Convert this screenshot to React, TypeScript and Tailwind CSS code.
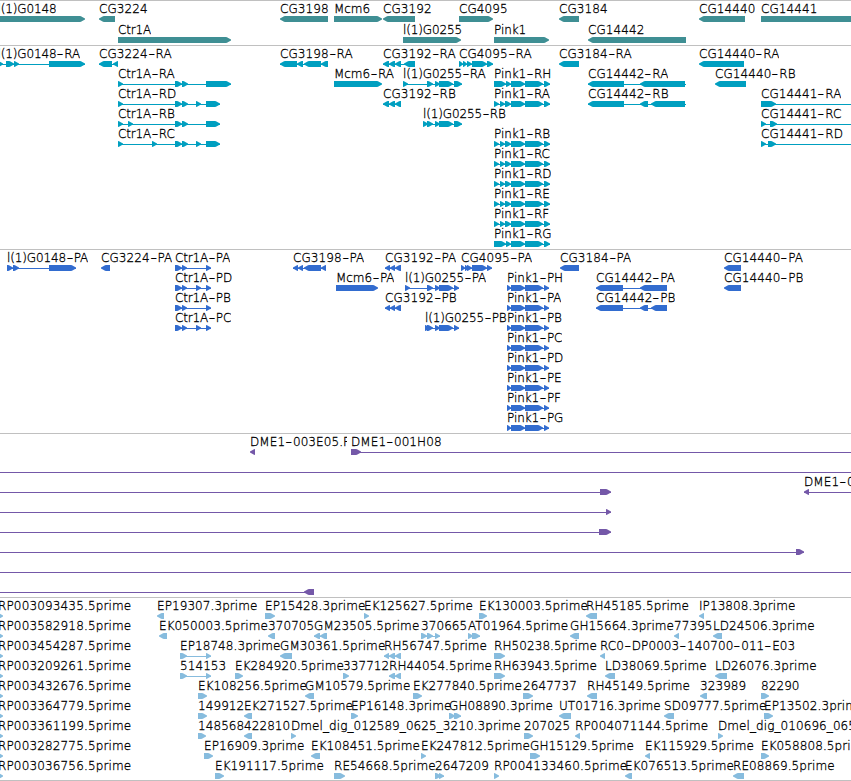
type Dir = 'L' | 'R';
type Feature = {
  label?: string;
  x: number;
  dir: Dir;
  blocks: [number, number][];
  /** Extent of the thin connector, when it reaches past the blocks. */
  line?: [number, number];
  /** Visible width of a clipped label. */
  clip?: number;
};
type Row = Feature[];

const f = (label: string, dir: Dir, blocks: [number, number][], line?: [number, number], x?: number): Feature => ({
  label,
  dir,
  blocks,
  line,
  x: x ?? blocks[0][0],
});

const genes: Row[] = [
  [
    f('l(1)G0148', 'R', [[-10, 85]], undefined, -2.5),
    f('CG3224', 'L', [[99, 115]]),
    f('CG3198', 'L', [[280, 328]]),
    f('Mcm6', 'R', [[334, 382]]),
    f('CG3192', 'L', [[383, 415]]),
    f('CG4095', 'R', [[459, 493]]),
    f('CG3184', 'L', [[559, 579]]),
    f('CG14440', 'L', [[699, 745]]),
    f('CG14441', 'R', [[761, 900]]),
  ],
  [
    f('Ctr1A', 'R', [[118, 231]]),
    f('l(1)G0255', 'R', [[403, 461]]),
    f('Pink1', 'R', [[494, 549]]),
    f('CG14442', 'L', [[588, 686]]),
  ],
];

const pinkR = (name: string) =>
  f(name, 'R', [[494, 499], [500, 505], [505, 511], [511, 525], [525, 543], [544, 550]]);
const pinkRLong = (name: string) => f(name, 'R', [[494, 506], [506, 511], [511, 525], [525, 543], [544, 550]]);

const transcripts: Row[] = [
  [
    f('l(1)G0148-RA', 'R', [[-2, 3], [6, 14], [14, 19], [49, 85]], [-10, 85], -2.5),
    f('CG3224-RA', 'L', [[99, 112], [113, 118]]),
    f('CG3198-RA', 'L', [[280, 297], [297, 303], [304, 321], [321, 328]]),
    f('CG3192-RA', 'L', [[383, 389], [389, 395], [395, 401], [404, 415]]),
    f('CG4095-RA', 'R', [[459, 463], [463, 467], [467, 472], [472, 487], [487, 493]]),
    f('CG3184-RA', 'L', [[559, 579]]),
    f('CG14440-RA', 'L', [[699, 744]]),
  ],
  [
    f('Ctr1A-RA', 'R', [[118, 123], [175, 182], [182, 188], [206, 231]]),
    f('Mcm6-RA', 'R', [[334, 382]]),
    f('l(1)G0255-RA', 'R', [[403, 408], [427, 433], [435, 440], [439, 453], [454, 462]]),
    pinkRLong('Pink1-RH'),
    f('CG14442-RA', 'L', [[588, 624], [640, 685]], [588, 686]),
    f('CG14440-RB', 'L', [[715, 746]]),
  ],
  [
    f('Ctr1A-RD', 'R', [[118, 123], [175, 182], [182, 188], [196, 201], [206, 220]]),
    f('CG3192-RB', 'L', [[383, 389], [389, 395], [395, 401]]),
    pinkR('Pink1-RA'),
    f('CG14442-RB', 'L', [[588, 624], [640, 648], [651, 685]], [588, 686]),
    f('CG14441-RA', 'R', [[761, 776]], [761, 900]),
  ],
  [
    f('Ctr1A-RB', 'R', [[118, 123], [128, 133], [175, 182], [182, 188], [206, 220]]),
    f('l(1)G0255-RB', 'R', [[423, 428], [427, 433], [435, 440], [439, 453], [454, 462]]),
    f('CG14441-RC', 'R', [[761, 766], [770, 777]], [761, 900]),
  ],
  [
    f('Ctr1A-RC', 'R', [[118, 123], [152, 157], [175, 182], [182, 188], [196, 201], [206, 220]]),
    pinkR('Pink1-RB'),
    f('CG14441-RD', 'R', [[761, 766], [768, 776]], [761, 900]),
  ],
  [pinkR('Pink1-RC')],
  [pinkR('Pink1-RD')],
  [pinkR('Pink1-RE')],
  [pinkR('Pink1-RF')],
  [pinkRLong('Pink1-RG')],
];

const pinkP = (name: string) => f(name, 'R', [[507, 511], [511, 525], [525, 543], [544, 549]]);
const ctrShort = (name: string) => f(name, 'R', [[175, 182], [182, 187], [206, 211]]);
const ctrLong = (name: string) => f(name, 'R', [[175, 182], [182, 187], [196, 201], [206, 211]]);

const proteins: Row[] = [
  [
    f('l(1)G0148-PA', 'R', [[7, 13], [13, 19], [49, 76]]),
    f('CG3224-PA', 'L', [[101, 110]]),
    ctrShort('Ctr1A-PA'),
    f('CG3198-PA', 'L', [[293, 298], [298, 303], [304, 321], [321, 326]]),
    f('CG3192-PA', 'L', [[385, 390], [390, 395], [395, 401]]),
    f('CG4095-PA', 'R', [[461, 465], [465, 468], [467, 472], [472, 487], [487, 492]]),
    f('CG3184-PA', 'L', [[560, 579]]),
    f('CG14440-PA', 'L', [[724, 741]]),
  ],
  [
    ctrLong('Ctr1A-PD'),
    f('Mcm6-PA', 'R', [[336, 378]]),
    f('l(1)G0255-PA', 'R', [[405, 410], [427, 433], [435, 440], [439, 453], [454, 459]]),
    pinkP('Pink1-PH'),
    f('CG14442-PA', 'L', [[596, 623], [640, 667]]),
    f('CG14440-PB', 'L', [[724, 741]]),
  ],
  [
    ctrShort('Ctr1A-PB'),
    f('CG3192-PB', 'L', [[385, 390], [390, 395], [395, 401]]),
    pinkP('Pink1-PA'),
    f('CG14442-PB', 'L', [[596, 623], [640, 648], [651, 667]]),
  ],
  [
    ctrLong('Ctr1A-PC'),
    f('l(1)G0255-PB', 'R', [[425, 430], [427, 433], [435, 440], [439, 453], [454, 459]]),
    pinkP('Pink1-PB'),
  ],
  [pinkP('Pink1-PC')],
  [pinkP('Pink1-PD')],
  [pinkP('Pink1-PE')],
  [pinkP('Pink1-PF')],
  [pinkP('Pink1-PG')],
];

const clones: Row[] = [
  [
    { label: 'DME1-003E05.F', x: 250, dir: 'L', blocks: [[250, 255]], clip: 97 },
    f('DME1-001H08', 'R', [[351, 361]], [351, 900]),
  ],
  [{ x: 0, dir: 'R', blocks: [], line: [0, 900] }],
  [
    { x: 0, dir: 'R', blocks: [[600, 611]], line: [0, 611] },
    f('DME1-0', 'L', [[804, 809]], [804, 900]),
  ],
  [{ x: 0, dir: 'R', blocks: [[606, 611]], line: [0, 611] }],
  [{ x: 0, dir: 'R', blocks: [[599, 611]], line: [0, 611] }],
  [{ x: 0, dir: 'R', blocks: [[796, 804]], line: [0, 804] }],
  [{ x: 0, dir: 'R', blocks: [], line: [0, 900] }],
  [{ x: 0, dir: 'L', blocks: [[304, 314]], line: [0, 314] }],
];

const edge = (name: string) => f(name, 'R', [[-2, 3]], undefined, -2);

const ests: Row[] = [
  [
    edge('RP003093435.5prime'),
    f('EP19307.3prime', 'L', [[157, 164]]),
    f('EP15428.3prime', 'R', [[265, 275]]),
    f('EK125627.5prime', 'R', [[364, 369]]),
    f('EK130003.5prime', 'R', [[479, 487]]),
    f('RH45185.5prime', 'L', [[586, 597]]),
    f('IP13808.3prime', 'L', [[699, 704]]),
  ],
  [
    edge('RP003582918.5prime'),
    f('EK050003.5prime', 'L', [[159, 167]]),
    f('370705', 'L', [[268, 275]]),
    f('GM23505.5prime', 'L', [[314, 320], [320, 327]]),
    f('370665', 'R', [[421, 427], [427, 433], [435, 440]]),
    f('AT01964.5prime', 'R', [[468, 473], [472, 480]]),
    f('GH15664.3prime', 'L', [[570, 579]]),
    f('77395', 'L', [[674, 679]]),
    f('LD24506.3prime', 'L', [[713, 722]]),
  ],
  [
    edge('RP003454287.5prime'),
    f('EP18748.3prime', 'R', [[180, 187], [206, 211]]),
    f('GM30361.5prime', 'L', [[280, 292]]),
    f('RH56747.5prime', 'L', [[384, 389], [389, 395], [395, 401]]),
    f('RH50238.5prime', 'R', [[494, 505]]),
    f('RC0-DP0003-140700-011-E03', 'L', [[600, 605]]),
  ],
  [
    edge('RP003209261.5prime'),
    f('514153', 'R', [[180, 187], [206, 211]]),
    f('EK284920.5prime', 'R', [[235, 243]]),
    f('337712', 'R', [[343, 349]]),
    f('RH44054.5prime', 'L', [[389, 395], [395, 401]]),
    f('RH63943.5prime', 'R', [[494, 505]]),
    f('LD38069.5prime', 'L', [[605, 615]]),
    f('LD26076.3prime', 'L', [[715, 727]]),
  ],
  [
    edge('RP003432676.5prime'),
    f('EK108256.5prime', 'R', [[198, 207]]),
    f('GM10579.5prime', 'L', [[305, 314]]),
    f('EK277840.5prime', 'R', [[413, 422]]),
    f('2647737', 'R', [[523, 533]]),
    f('RH45149.5prime', 'L', [[587, 597]]),
    f('323989', 'L', [[700, 707]]),
    f('82290', 'R', [[761, 769]]),
  ],
  [
    edge('RP003364779.5prime'),
    f('149912', 'R', [[198, 207]]),
    f('EK271527.5prime', 'L', [[244, 252]]),
    f('EP16148.3prime', 'R', [[351, 358]]),
    f('GH08890.3prime', 'R', [[449, 455], [454, 461]]),
    f('UT01716.3prime', 'L', [[559, 571]]),
    f('SD09777.5prime', 'L', [[664, 674]]),
    f('EP13502.3prime', 'R', [[764, 773]]),
  ],
  [
    edge('RP003361199.5prime'),
    f('148568', 'R', [[198, 206]]),
    f('422810', 'L', [[244, 252]]),
    f('Dmel_dig_012589_0625_3210.3prime', 'R', [[291, 296]]),
    f('207025', 'R', [[524, 533]]),
    f('RP004071144.5prime', 'L', [[575, 580]]),
    f('Dmel_dig_010696_065', 'R', [[718, 723]]),
  ],
  [
    edge('RP003282775.5prime'),
    f('EP16909.3prime', 'R', [[204, 213]]),
    f('EK108451.5prime', 'L', [[311, 320]]),
    f('EK247812.5prime', 'R', [[421, 426]]),
    f('GH15129.5prime', 'R', [[530, 540]]),
    f('EK115929.5prime', 'L', [[645, 650]]),
    f('EK058808.5prime', 'R', [[761, 769]]),
  ],
  [
    edge('RP003036756.5prime'),
    f('EK191117.5prime', 'R', [[215, 224]]),
    f('RE54668.5prime', 'R', [[334, 345]]),
    f('2647209', 'R', [[435, 441], [439, 444]]),
    f('RP004133460.5prime', 'R', [[494, 499]]),
    f('EK076513.5prime', 'L', [[625, 632]]),
    f('RE08869.5prime', 'L', [[733, 744]]),
  ],
];

/** Block with a tapered head of at most five pixels on its leading side. */
function blockPoints([a, b]: [number, number], dir: Dir) {
  const head = Math.min(5, b - a);
  return dir === 'R'
    ? `${a},0 ${b - head},0 ${b - head + 1},0.2 ${b},2.4 ${b},3.6 ${b - head + 1},5.8 ${b - head},6 ${a},6`
    : `${b},0 ${a + head},0 ${a + head - 1},0.2 ${a},2.4 ${a},3.6 ${a + head - 1},5.8 ${a + head},6 ${b},6`;
}

function tracking(text: string) {
  if (text.startsWith('l(1)')) return -0.14;
  if (text.startsWith('Ctr1A')) return -0.16;
  if (text.startsWith('Pink1')) return -0.08;
  if (text.startsWith('Mcm6')) return -0.05;
  if (text.startsWith('RP')) return 0.15;
  return 0.08;
}

/** Label text; dashes are set wide, on an eight-pixel advance. */
function Label({ text }: { text: string }) {
  return (
    <>
      {text.split(/(-)/).map((part, i) =>
        part === '-' ? (
          <span key={i} className="inline-block w-[7.8px] scale-x-150 text-center">
            -
          </span>
        ) : (
          part
        ),
      )}
    </>
  );
}

function Glyphs({ row }: { row: Row }) {
  return (
    <svg width="851" height="6" className="block h-[6px] w-[851px] shrink-0 overflow-visible fill-current">
      {row.map((item, i) => {
        const [from, to] = item.line ?? [item.blocks[0][0], item.blocks[item.blocks.length - 1][1]];
        const connected = item.line || item.blocks.length > 1;
        return (
          <g key={i}>
            {connected && <rect x={from} y="3" width={to - from} height="1" shapeRendering="crispEdges" />}
            {item.blocks.map((block, j) => (
              <polygon key={j} points={blockPoints(block, item.dir)} />
            ))}
          </g>
        );
      })}
    </svg>
  );
}

function Track({ rows, color, rowHeight, last }: { rows: Row[]; color: string; rowHeight: string; last?: boolean }) {
  return (
    <section className={`flex flex-col border-t border-[#c0c0c0] ${last ? 'border-b pb-[2px]' : ''} ${color}`}>
      {rows.map((row, i) => (
        <div key={i} className={`flex flex-col ${rowHeight}`}>
          <div className="relative h-[15px] shrink-0 text-[12px] leading-[15px] font-extralight text-black [-webkit-text-stroke:0.3px_#000]">
            {row.map(
              (item, j) =>
                item.label && (
                  <span
                    key={j}
                    className="absolute top-px overflow-hidden whitespace-nowrap"
                    style={{ left: item.x, width: item.clip, letterSpacing: tracking(item.label) }}
                  >
                    <Label text={item.label} />
                  </span>
                ),
            )}
          </div>
          <Glyphs row={row} />
        </div>
      ))}
    </section>
  );
}

export default function App() {
  return (
    <main className="flex h-[781px] w-[851px] flex-col overflow-hidden bg-white font-['DejaVu_Sans','DejaVu_Sans_Light',sans-serif]">
      <div className="h-[45px] shrink-0">
        <Track rows={genes} color="text-[#3f8f94]" rowHeight="h-[21px]" />
      </div>
      <div className="h-[204px] shrink-0">
        <Track rows={transcripts} color="text-[#009fc0]" rowHeight="h-[20px]" />
      </div>
      <div className="h-[184px] shrink-0">
        <Track rows={proteins} color="text-[#326ccf]" rowHeight="h-[20px]" />
      </div>
      <div className="h-[164px] shrink-0">
        <Track rows={clones} color="text-[#7458a8]" rowHeight="h-[20px]" />
      </div>
      <div className="h-[184px] shrink-0">
        <Track rows={ests} color="text-[#87bcde]" rowHeight="h-[20px]" last />
      </div>
    </main>
  );
}
